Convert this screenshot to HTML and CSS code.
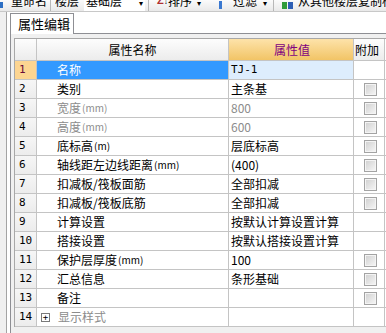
FILE: index.html
```html
<!DOCTYPE html>
<html lang="zh">
  <head>
    <meta charset="utf-8">
    <title>属性编辑</title>
    <link rel="stylesheet" href="styles.css">
  </head>
  <body>
    <div class="toolbar">
      <span class="tb_icon ic_rename"></span><span class="tb_text t_rename">重命名</span>
      <span class="tb_sep s1"></span>
      <span class="tb_text">楼层</span>
      <span class="tb_combo"><span>基础层</span><span class="tb_arrow">▾</span></span>
      <span class="tb_sep s2"></span>
      <span class="tb_icon ic_sort">Z<small>↓</small></span><span class="tb_text">排序</span><span class="tb_arrow a_sort">▾</span>
      <span class="tb_icon ic_filter"></span><span class="tb_text">过滤</span><span class="tb_arrow a_filter">▾</span>
      <span class="tb_sep s3"></span>
      <span class="tb_icon ic_copy"></span><span class="tb_text">从其他楼层复制构件</span>
    </div>

    <div class="work">
      <div class="tabs">
        <div class="tab">属性编辑</div>
        <div class="tab_fill"></div>
      </div>
      <div class="panel">
        <div class="grid">
          <div class="row head">
            <div class="c_num"></div>
            <div class="c_name">属性名称</div>
            <div class="c_val">属性值</div>
            <div class="c_add">附加</div>
          </div>
          <div class="row sel">
            <div class="c_num">1</div>
            <div class="c_name">名称</div>
            <div class="c_val">TJ-1</div>
            <div class="c_add"></div>
          </div>
          <div class="row">
            <div class="c_num">2</div>
            <div class="c_name">类别</div>
            <div class="c_val">主条基</div>
            <div class="c_add"><span class="chk"></span></div>
          </div>
          <div class="row dim">
            <div class="c_num">3</div>
            <div class="c_name">宽度<small>(mm)</small></div>
            <div class="c_val">800</div>
            <div class="c_add"><span class="chk"></span></div>
          </div>
          <div class="row dim">
            <div class="c_num">4</div>
            <div class="c_name">高度<small>(mm)</small></div>
            <div class="c_val">600</div>
            <div class="c_add"><span class="chk"></span></div>
          </div>
          <div class="row">
            <div class="c_num">5</div>
            <div class="c_name">底标高<small>(m)</small></div>
            <div class="c_val">层底标高</div>
            <div class="c_add"><span class="chk"></span></div>
          </div>
          <div class="row">
            <div class="c_num">6</div>
            <div class="c_name">轴线距左边线距离<small>(mm)</small></div>
            <div class="c_val">(400)</div>
            <div class="c_add"><span class="chk"></span></div>
          </div>
          <div class="row">
            <div class="c_num">7</div>
            <div class="c_name">扣减板/筏板面筋</div>
            <div class="c_val">全部扣减</div>
            <div class="c_add"><span class="chk"></span></div>
          </div>
          <div class="row">
            <div class="c_num">8</div>
            <div class="c_name">扣减板/筏板底筋</div>
            <div class="c_val">全部扣减</div>
            <div class="c_add"><span class="chk"></span></div>
          </div>
          <div class="row">
            <div class="c_num">9</div>
            <div class="c_name">计算设置</div>
            <div class="c_val">按默认计算设置计算</div>
            <div class="c_add"></div>
          </div>
          <div class="row">
            <div class="c_num">10</div>
            <div class="c_name">搭接设置</div>
            <div class="c_val">按默认搭接设置计算</div>
            <div class="c_add"></div>
          </div>
          <div class="row">
            <div class="c_num">11</div>
            <div class="c_name">保护层厚度<small>(mm)</small></div>
            <div class="c_val">100</div>
            <div class="c_add"><span class="chk"></span></div>
          </div>
          <div class="row">
            <div class="c_num">12</div>
            <div class="c_name">汇总信息</div>
            <div class="c_val">条形基础</div>
            <div class="c_add"><span class="chk"></span></div>
          </div>
          <div class="row">
            <div class="c_num">13</div>
            <div class="c_name">备注</div>
            <div class="c_val"></div>
            <div class="c_add"><span class="chk"></span></div>
          </div>
          <div class="row group">
            <div class="c_num">14</div>
            <div class="c_name"><span class="expand">+</span>显示样式</div>
            <div class="c_val"></div>
            <div class="c_add"></div>
          </div>
        </div>
      </div>
    </div>
  </body>
</html>
```

FILE: styles.css
```css
html, body {
  margin:0;
  padding:0;
}
body {
  font-family: "Noto Sans CJK SC", "Liberation Sans", sans-serif;
  font-size:12px;
  color:#000;
  background-color:#f0f0f0;
  width:386px;
  height:333px;
  overflow:hidden;
}

/* toolbar, cut at the top of the shot */
.toolbar {
  height:11px;
  border-bottom:1px solid #c8c8c8;
  background:linear-gradient(#fbfbfb, #e9e9e9);
  display:flex;
  align-items:flex-end;
  overflow:hidden;
  white-space:nowrap;
}
.toolbar > span {
  flex-shrink:0;
}
.tb_text {
  line-height:16px;
  margin-bottom:2px;
}
.t_rename {
  margin-left:8px;
}
.tb_sep {
  width:1px;
  height:11px;
  background-color:#b8b8b8;
}
.s1 {
  margin:0 4px 0 3px;
}
.s2 {
  margin:0 8px 0 3px;
}
.s3 {
  margin:0 8px 0 6px;
}
.tb_icon {
  display:inline-block;
}
.ic_rename {
  width:3px;
  height:6px;
  background-color:#2d6fc4;
  margin-bottom:3px;
}
.ic_sort {
  width:10px;
  margin-right:1px;
  color:#b03030;
  font-family:"Liberation Sans", sans-serif;
  font-weight:bold;
  font-size:11px;
  line-height:14px;
  margin-bottom:2px;
}
.ic_sort small {
  color:#000;
  font-size:8px;
  font-weight:normal;
  margin-left:0;
}
.ic_filter {
  width:3px;
  height:8px;
  background-color:#3a78d0;
  margin:0 11px 2px 18px;
}
.ic_copy {
  width:11px;
  height:7px;
  margin:0 5px 2px 0;
  background:linear-gradient(90deg, #2f9b3a 0 5px, transparent 5px 6px, #2e5fb5 6px);
}
.tb_arrow {
  display:inline-block;
  width:5px;
  text-align:center;
  font-size:8px;
  line-height:12px;
  margin-bottom:2px;
}
.a_sort {
  margin-left:4px;
}
.a_filter {
  margin-left:5px;
}
.tb_combo {
  display:flex;
  align-items:flex-end;
  justify-content:space-between;
  width:61px;
  height:11px;
  margin-left:5px;
  background-color:#fff;
  padding:0 2px 0 2px;
  box-sizing:border-box;
}
.tb_combo span:first-child {
  line-height:16px;
  margin-bottom:2px;
}

/* tab area */
.work {
  margin-left:6px;
  border-left:1px solid #a4a4a4;
  padding-left:3px;
  background-color:#fff;
  height:321px;
}
.tabs {
  display:flex;
  padding-top:1px;
  background-color:#fff;
}
.tab {
  width:64px;
  height:21px;
  border:1px solid #8e8f94;
  border-bottom:none;
  padding-left:7px;
  box-sizing:border-box;
  font-size:13px;
  line-height:20px;
  background-color:#fff;
}
.tab_fill {
  flex-grow:1;
  border-bottom:1px solid #8e8f94;
}
.panel {
  border-left:1px solid #8e8f94;
  padding:4px 0 0 3px;
  background-color:#f0f0f0;
  height:300px;
}

/* property grid */
.grid {
  border-top:1px solid #a8a8a8;
  border-left:1px solid #a8a8a8;
  width:371px;
  background-color:#fff;
}
.row {
  display:flex;
  height:19px;
  border-bottom:1px solid #c4c4c4;
  box-sizing:border-box;
  line-height:18px;
  white-space:nowrap;
}
.row > div {
  border-right:1px solid #c4c4c4;
  box-sizing:border-box;
  overflow:hidden;
}
.c_num {
  width:22px;
  padding-left:4px;
  background:linear-gradient(#f6f6f6, #ececec);
  font-family:"DejaVu Sans Mono", monospace;
  font-size:11px;
}
.c_name {
  width:192px;
  padding-left:20px;
  display:flex;
  align-items:center;
}
.c_val {
  width:125px;
  padding-left:2px;
}
.c_add {
  width:31px;
  display:flex;
  align-items:center;
  justify-content:center;
  padding-left:2px;
}
.c_name small {
  font-size:10px;
  margin-left:1px;
}

.head {
  height:22px;
  line-height:21px;
}
.head > div {
  background:linear-gradient(#fdfdfd, #ececec);
}
.head .c_name {
  justify-content:center;
  padding-left:0;
}
.head .c_val {
  text-align:center;
  color:#800080;
  background:linear-gradient(#fde3aa, #f2c466);
}
.head .c_add {
  justify-content:flex-start;
  padding-left:1px;
}

.sel .c_num {
  background:#fdd591;
  color:#6a0a3a;
}
.sel .c_name {
  background-color:#3399ff;
  color:#fff;
}
.sel .c_val {
  background-color:#ddedfd;
  font-family:"DejaVu Sans Mono", monospace;
  font-size:11px;
}

.dim .c_name,
.dim .c_val,
.group .c_name {
  color:#8c8c8c;
}

.chk {
  width:13px;
  height:13px;
  box-sizing:border-box;
  border:1px solid #a3a3a3;
  background:linear-gradient(135deg, #cfcfcf, #f7f7f7);
  box-shadow:inset 0 0 0 1px #f4f4f4;
}
.expand {
  width:9px;
  height:9px;
  box-sizing:border-box;
  border:1px solid #7a7a7a;
  background-color:#fff;
  color:#000;
  font-family:"DejaVu Sans Mono", monospace;
  font-size:9px;
  line-height:7px;
  text-align:center;
  margin:0 8px 0 -16px;
}
```
